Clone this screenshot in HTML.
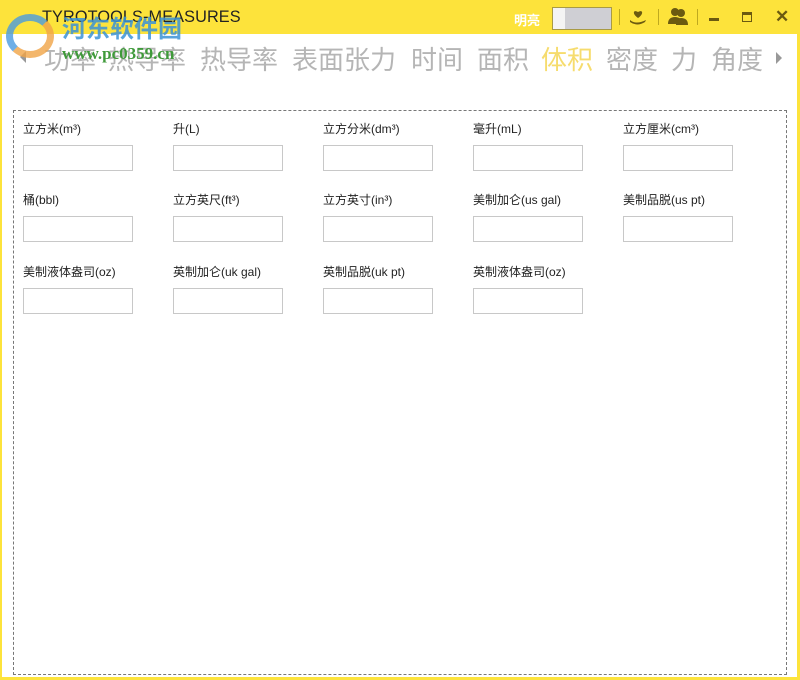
<!DOCTYPE html>
<html><head><meta charset="utf-8"><style>
*{margin:0;padding:0;box-sizing:border-box}
body{width:800px;height:680px;overflow:hidden;background:#fde33b;font-family:"Liberation Sans","Noto Sans CJK SC",sans-serif;position:relative}
.main{position:absolute;left:2px;top:34px;width:795px;height:643px;background:#fff}
.title{position:absolute;left:42px;top:8px;font-size:16.3px;color:#222;letter-spacing:0.1px}
.tabs{position:absolute;top:40px;font-size:26px;color:#b5b5b5;white-space:nowrap}
.box{position:absolute;left:13px;top:110px;width:774px;height:565px;border:1px dashed #777}
.lbl{position:absolute;font-size:12px;color:#222}
.inp{position:absolute;width:110px;height:26px;border:1px solid #c8c8c8;background:#fff}
.ic{position:absolute;top:9px;color:#6b5a10;font-weight:bold}
.sep{position:absolute;top:9px;width:1px;height:16px;background:#bfa91f}
</style></head><body>
<div class="main"></div>
<div class="title">TYROTOOLS-MEASURES</div>
<div style="position:absolute;left:514px;top:10px;font-size:13px;font-weight:bold;color:#fff">明亮</div>
<div style="position:absolute;left:552px;top:7px;width:60px;height:23px;border:1px solid #a89a45;background:#cfcfd4"></div>
<div style="position:absolute;left:553px;top:8px;width:12px;height:21px;background:#f4f4f4"></div>
<div class="sep" style="left:619px"></div>
<div class="sep" style="left:658px"></div>
<div class="sep" style="left:697px"></div>
<svg style="position:absolute;left:628px;top:8px" width="20" height="18"><path d="M10 10 C4 6 5 1 10 4 C15 1 16 6 10 10Z M2 12 Q8 17 18 12 L17 14 Q9 19 2 14Z" fill="#6b5a10"/></svg>
<svg style="position:absolute;left:666px;top:6px" width="24" height="22"><circle cx="9" cy="6" r="4" fill="#6b5a10"/><path d="M2 18 Q2 11 9 11 Q16 11 16 18Z" fill="#6b5a10"/><circle cx="15" cy="7" r="4" fill="#6b5a10"/><path d="M10 19 Q10 12 15 12 Q22 12 22 19Z" fill="#6b5a10"/></svg>
<div style="position:absolute;left:709px;top:18px;width:10px;height:3px;background:#6b5a10"></div>
<div style="position:absolute;left:742px;top:12px;width:10px;height:10px;border:1.5px solid #6b5a10;border-top-width:3px"></div>
<div class="ic" style="left:775px;top:7px;font-size:17px">✕</div>
<div style="position:absolute;left:20px;top:51px;width:0;height:0;border-top:6px solid transparent;border-bottom:6px solid transparent;border-right:6px solid #999"></div>
<div style="position:absolute;left:776px;top:52px;width:0;height:0;border-top:6px solid transparent;border-bottom:6px solid transparent;border-left:6px solid #999"></div>
<div class="tabs" style="left:44px">功率</div>
<div class="tabs" style="left:108px">热导率</div>
<div class="tabs" style="left:200px">热导率</div>
<div class="tabs" style="left:292px">表面张力</div>
<div class="tabs" style="left:411px">时间</div>
<div class="tabs" style="left:477px">面积</div>
<div class="tabs" style="left:541px;color:#f6dc6e">体积</div>
<div class="tabs" style="left:606px">密度</div>
<div class="tabs" style="left:671px">力</div>
<div class="tabs" style="left:711px">角度</div>
<div style="position:absolute;left:62px;top:9px;font-size:24px;font-weight:bold;color:#3b93d8;opacity:.85">河东软件园</div>
<div style="position:absolute;left:62px;top:44px;font-size:17px;font-weight:bold;color:#3f9a3a;font-family:'Liberation Serif',serif">www.pc0359.cn</div>
<div style="position:absolute;left:6px;top:14px;width:48px;height:44px;border-radius:50%;border:7px solid #f1a447;border-top-color:#4a9be0;border-left-color:#4a9be0;opacity:.8"></div>
<div class="box"></div>
<div class="lbl" style="left:23px;top:120px">立方米(m³)</div>
<div class="lbl" style="left:173px;top:120px">升(L)</div>
<div class="lbl" style="left:323px;top:120px">立方分米(dm³)</div>
<div class="lbl" style="left:473px;top:120px">毫升(mL)</div>
<div class="lbl" style="left:623px;top:120px">立方厘米(cm³)</div>
<div class="inp" style="left:23px;top:145px"></div><div class="inp" style="left:173px;top:145px"></div><div class="inp" style="left:323px;top:145px"></div><div class="inp" style="left:473px;top:145px"></div><div class="inp" style="left:623px;top:145px"></div>
<div class="lbl" style="left:23px;top:191px">桶(bbl)</div>
<div class="lbl" style="left:173px;top:191px">立方英尺(ft³)</div>
<div class="lbl" style="left:323px;top:191px">立方英寸(in³)</div>
<div class="lbl" style="left:473px;top:191px">美制加仑(us gal)</div>
<div class="lbl" style="left:623px;top:191px">美制品脱(us pt)</div>
<div class="inp" style="left:23px;top:216px"></div><div class="inp" style="left:173px;top:216px"></div><div class="inp" style="left:323px;top:216px"></div><div class="inp" style="left:473px;top:216px"></div><div class="inp" style="left:623px;top:216px"></div>
<div class="lbl" style="left:23px;top:263px">美制液体盎司(oz)</div>
<div class="lbl" style="left:173px;top:263px">英制加仑(uk gal)</div>
<div class="lbl" style="left:323px;top:263px">英制品脱(uk pt)</div>
<div class="lbl" style="left:473px;top:263px">英制液体盎司(oz)</div>
<div class="inp" style="left:23px;top:288px"></div><div class="inp" style="left:173px;top:288px"></div><div class="inp" style="left:323px;top:288px"></div><div class="inp" style="left:473px;top:288px"></div>
</body></html>
